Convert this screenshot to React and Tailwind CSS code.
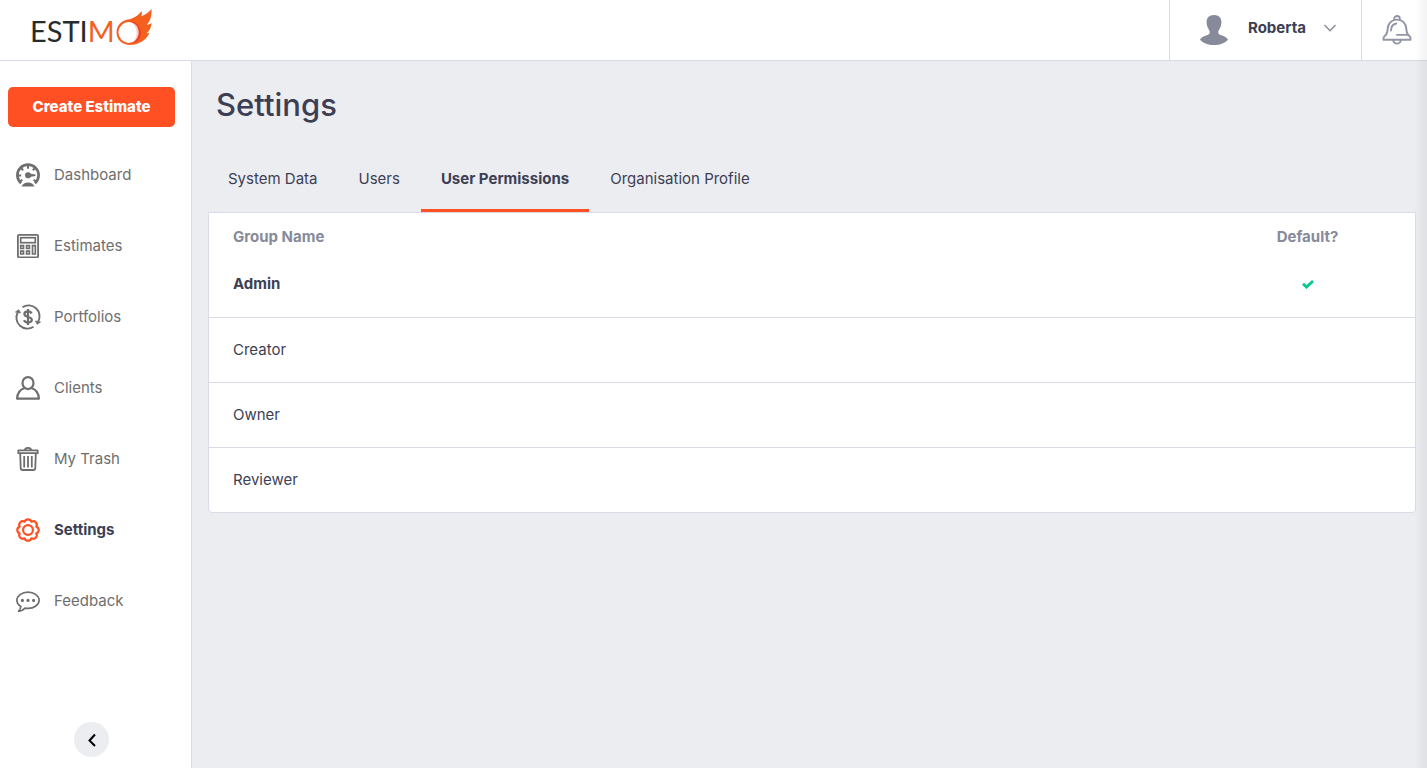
import React from "react";

const DashboardIcon = () => (
  <svg className="w-6 h-6" viewBox="0 0 24 24" fill="none" stroke="currentColor" aria-hidden="true">
    <path d="M5 20.200A10.600 10.600 0 1 1 19 20.200" strokeWidth="2.700" />
    <path d="M12 2v3.800M5 5l2.200 2.200M19 5l-2.200 2.200M2 12.500h3.200M4 18.500l2.400-1.800M20 18.500l-2.400-1.800" strokeWidth="2" />
    <path d="M5.500 23.500c1.300-2.600 3.500-3.900 6.500-3.900s5.200 1.300 6.500 3.900z" fill="currentColor" stroke="none" />
    <path d="M12 9.300c1.400 0 2.400.7 2.900 1.500l4.600.8v1.300l-4.600.8c-.5.900-1.500 1.600-2.900 1.600a3 3 0 0 1 0-6z" fill="currentColor" stroke="none" />
  </svg>
);

const EstimatesIcon = () => (
  <svg className="w-6 h-6" viewBox="0 0 24 24" fill="none" stroke="currentColor" aria-hidden="true">
    <rect x="1.900" y="0.900" width="20.200" height="22.400" rx="1" strokeWidth="1.800" />
    <rect x="4.700" y="3.700" width="14.600" height="5" strokeWidth="1.700" />
    <path d="M4.700 11.700h2.800v2.800H4.700zM10.600 11.700h2.800v2.800h-2.800zM4.700 17.200h2.800V20H4.700zM10.600 17.200h2.800V20h-2.800zM16.500 11.700h2.800V20h-2.800z" strokeWidth="1.700" />
  </svg>
);

const PortfoliosIcon = () => (
  <svg className="w-6 h-6 overflow-visible" viewBox="0 0 24 24" fill="none" stroke="currentColor" aria-hidden="true">
    <path d="M6.500 2.200A11 11 0 0 1 22.300 16.500M17.500 21.800A11 11 0 0 1 1.700 7.500" strokeWidth="1.900" />
    <path d="M19.500 16l5 1-3.300 2.300zM4.500 8l-5-1 3.300-2.300z" fill="currentColor" strokeWidth="0.800" />
    <path d="M15.600 8.500c-.6-1.400-1.900-2.100-3.600-2.100-2.100 0-3.600 1-3.600 2.600 0 3.900 7.400 2 7.400 5.800 0 1.700-1.600 2.700-3.800 2.700-2 0-3.400-.8-4-2.400M12 4v16" strokeWidth="2.200" />
  </svg>
);

const ClientsIcon = () => (
  <svg className="w-6 h-6" viewBox="0 0 24 24" fill="none" stroke="currentColor" strokeWidth="2.200" strokeLinejoin="round" aria-hidden="true">
    <path d="M8.700 12C4.200 13.400 1.300 17 1.100 22.700h21.800c-.2-5.700-3.100-9.300-7.600-10.700" />
    <ellipse cx="12" cy="7.100" rx="5.500" ry="6" />
  </svg>
);

const TrashIcon = () => (
  <svg className="w-6 h-6" viewBox="0 0 24 24" fill="none" stroke="currentColor" strokeWidth="1.800" strokeLinejoin="round" aria-hidden="true">
    <path d="M2.300 3.300h19.400v2.900H2.300zM8.800 3.300C9 1.600 10 .9 12 .9s3 .7 3.200 2.400" />
    <path d="M4.200 6.500l.5 14.600c.1 1.200.8 1.900 2 1.900h10.600c1.200 0 1.900-.7 2-1.900l.5-14.600M8.200 9v11.500M12 9v11.500M15.800 9v11.500" />
  </svg>
);

const SettingsIcon = () => (
  <svg className="w-6 h-6" viewBox="0 0 24 24" fill="none" stroke="currentColor" strokeWidth="2.200" strokeLinejoin="round" aria-hidden="true">
    <path d="M20.300 15.400A3.600 3.600 0 0 1 15.400 20.300A3.600 3.600 0 0 1 8.600 20.300A3.600 3.600 0 0 1 3.700 15.400A3.600 3.600 0 0 1 3.700 8.600A3.600 3.600 0 0 1 8.600 3.700A3.600 3.600 0 0 1 15.400 3.700A3.600 3.600 0 0 1 20.300 8.600A3.600 3.600 0 0 1 20.300 15.400Z" />
    <circle cx="12" cy="12" r="4.900" />
  </svg>
);

const FeedbackIcon = () => (
  <svg className="w-6 h-6" viewBox="0 0 24 24" fill="none" stroke="currentColor" strokeWidth="1.700" strokeLinejoin="round" aria-hidden="true">
    <path d="M12 3.200c6.200 0 11.100 3.600 11.100 8.100S18.200 19.400 12 19.400c-1 0-2-.1-2.900-.3-1.700 1.900-4.100 3-6.600 3.200 1.500-1.500 2.300-3 2.300-4.800C2.300 16 .9 13.800.9 11.300.9 6.800 5.800 3.200 12 3.200z" />
    <path d="M4.800 11.400a1.600 1.600 0 1 0 3.200 0 1.600 1.600 0 1 0-3.200 0zM10.400 11.400a1.600 1.600 0 1 0 3.200 0 1.600 1.600 0 1 0-3.200 0zM16 11.400a1.600 1.600 0 1 0 3.200 0 1.600 1.600 0 1 0-3.200 0z" fill="currentColor" stroke="none" />
  </svg>
);

const BellIcon = () => (
  <svg className="w-[30px] h-[30px]" viewBox="0 0 30 30" fill="none" stroke="currentColor" strokeWidth="1.900" strokeLinejoin="round" strokeLinecap="round" aria-hidden="true">
    <path d="M12.200 4.500V3.800a2.800 2.800 0 0 1 5.600 0v.7" />
    <path d="M15 4.600c-5.300 0-9 3.800-9.300 9-.2 3.600-.8 6-3.200 7.600-.7.500-1 1-1 2v1.600h27v-1.600c0-1-.3-1.500-1-2-2.400-1.600-3-4-3.200-7.600-.3-5.200-4-9-9.300-9z" />
    <path d="M9 15.500c0-3.600 2-6.300 5.300-7M15 19.900h11.500M11.300 25.200a3.700 3.400 0 0 0 7.400 0" />
  </svg>
);

const AvatarIcon = () => (
  <svg className="w-7 h-[30px]" viewBox="0 0 28 30" fill="#868a99" aria-hidden="true">
    <path d="M14 0c5 0 7.600 3 7.400 7.600-.2 3.800-1.500 6-2.700 7.800-.8 1.300-.6 3.200.8 4 2.200 1.100 6.500 1.800 8.500 5C25.500 27.800 20 30 14 30S2.500 27.800 0 24.400c2-3.200 6.300-3.900 8.500-5 1.400-.8 1.600-2.700.8-4C8.100 13.600 6.800 11.400 6.600 7.600 6.400 3 9 0 14 0z" />
  </svg>
);

const FireballIcon = () => (
  <svg className="w-9 h-9" viewBox="0 0 36 36" aria-hidden="true">
    <path
      fill="#f4611f"
      fillRule="evenodd"
      d="M.5 23.500C.5 16.500 5.500 11.500 12 10.600c5-.8 10-3.600 13.500-8.600.6 2 .5 3.500-.3 5.300C29.500 5.500 33 3.500 35.500 0c.6 6-1 11.500-4.700 16 1.700-.2 3.300-.8 4.700-2.200-.2 5-2 8.200-4.900 10.300 1 .3 1.800.2 2.800-.3C30.500 31.500 22 36 14 36 6.500 36 .5 30.800.5 23.500zM2.400 23.500a10.400 10.400 0 1 0 20.800 0 10.400 10.400 0 1 0-20.800 0z"
    />
    <path fill="#ee3b24" d="M13 12.300c8.500 2.500 10.500 16 3 21.800 8.500-1.500 10.500-9.600 7.400-15.400-2-4-6-6.400-10.400-6.400z" />
    <path fill="#fff" d="M13 13.100c7 .8 9.700 5.400 9.700 10.200 0 4.600-2.200 8.300-6.300 10.100 5.500-5.900 4.600-16.900-3.400-20.300z" opacity=".75" />
  </svg>
);

const navItems = [
  { label: "Dashboard", icon: DashboardIcon },
  { label: "Estimates", icon: EstimatesIcon },
  { label: "Portfolios", icon: PortfoliosIcon },
  { label: "Clients", icon: ClientsIcon },
  { label: "My Trash", icon: TrashIcon },
  { label: "Settings", icon: SettingsIcon, active: true },
  { label: "Feedback", icon: FeedbackIcon },
];

const tabs = ["System Data", "Users", "User Permissions", "Organisation Profile"];

const groups = [
  { name: "Admin", isDefault: true },
  { name: "Creator" },
  { name: "Owner" },
  { name: "Reviewer" },
];

const App = () => {
  return (
    <div className="min-h-screen flex flex-col bg-[#ecedf1] text-[#3c3f54] text-[15px] leading-6 font-['Inter',sans-serif]">
      <header className="h-[61px] flex justify-between bg-white border-b border-[#dadbe6]">
        <a href="#home" aria-label="Estimo" className="flex items-center gap-px pl-[30px] pb-1.5">
          <span className="pt-2 text-[29px] leading-9 text-[#262b2b] font-['Lato',sans-serif]">
            ESTI<span className="text-[#f4611f]">M</span>
          </span>
          <FireballIcon />
        </a>

        <div className="flex">
          <button type="button" className="w-48 flex items-center pl-[30px] pb-1 border-l border-[#dadbe6]">
            <span className="pt-1">
              <AvatarIcon />
            </span>
            <span className="ml-5 font-bold">Roberta</span>
            <svg className="ml-[18px] w-3 h-2" viewBox="0 0 12 8" fill="none" stroke="#868a99" strokeWidth="1.500" aria-hidden="true">
              <path d="M.5 1L6 6.700 11.500 1" />
            </svg>
          </button>
          <button type="button" aria-label="Notifications" className="w-[66px] flex items-center justify-center pl-1 pb-px border-l border-[#dadbe6] text-[#9295a5]">
            <BellIcon />
          </button>
        </div>
      </header>

      <div className="flex flex-1">
        {/* Sidebar */}
        <aside className="w-48 shrink-0 flex flex-col bg-white border-r border-[#dadbe6] pt-[26px] pb-[11px] pl-2 pr-4">
          <button type="button" className="h-10 rounded-[5px] bg-[#ff5023] text-white font-extrabold">
            Create Estimate
          </button>

          <nav className="mt-3">
            {navItems.map(({ label, icon: Icon, active }) => (
              <a
                key={label}
                href={`#${label}`}
                className={
                  active
                    ? "h-[71px] px-2 flex items-center gap-3.5 font-bold"
                    : "h-[71px] px-2 flex items-center gap-3.5 text-[#6e6e6e]"
                }
              >
                <span className={active ? "text-[#ff5023]" : "text-[#6e6e6e]"}>
                  <Icon />
                </span>
                {label}
              </a>
            ))}
          </nav>

          <button
            type="button"
            aria-label="Collapse menu"
            className="mt-auto mx-auto w-[35px] h-[35px] rounded-full bg-[#ecedf1] flex items-center justify-center"
          >
            <svg className="w-2 h-3.5" viewBox="0 0 8 14" fill="none" stroke="#000" strokeWidth="2" aria-hidden="true">
              <path d="M7 1.500L1.500 7.500 7 13" />
            </svg>
          </button>
        </aside>

        {/* Settings page */}
        <main className="flex-1 pl-4 pr-[11px] pt-6">
          <h1 className="pl-2 text-[31px] leading-10 font-medium">Settings</h1>

          <div role="tablist" className="mt-5 flex gap-px">
            {tabs.map((tab) => {
              const selected = tab === "User Permissions";
              return (
                <button
                  key={tab}
                  type="button"
                  role="tab"
                  aria-selected={selected}
                  className={
                    selected
                      ? "h-[67px] px-5 pt-[3px] border-b-[3px] border-[#ff5023] font-bold"
                      : "h-[67px] px-5"
                  }
                >
                  {tab}
                </button>
              );
            })}
          </div>

          <div className="bg-white border border-[#dadbe6] rounded-b overflow-hidden">
            <table className="w-full">
              <thead>
                <tr className="text-[#868a99]">
                  <th scope="col" className="pl-6 pt-3 pb-[3px] text-left font-bold">Group Name</th>
                  <th scope="col" className="w-[215px] pt-3 pb-[3px] font-bold">Default?</th>
                </tr>
              </thead>
              <tbody>
                {groups.map((group) => (
                  <tr key={group.name} className="border-b border-[#dadbe6] last:border-b-0">
                    <td className={group.isDefault ? "h-[65px] pl-6 font-bold" : "h-[65px] pl-6"}>{group.name}</td>
                    <td>
                      {group.isDefault && (
                        <svg className="mx-auto w-3 h-[9px]" viewBox="0 0 12 9" fill="none" stroke="#06c98d" strokeWidth="2.800" role="img" aria-label="Yes">
                          <path d="M1 3.800L4.500 7.100 11 1" />
                        </svg>
                      )}
                    </td>
                  </tr>
                ))}
              </tbody>
            </table>
          </div>
        </main>
      </div>

      <div className="fixed inset-y-0 right-0 w-3 bg-linear-to-l from-black/5 to-transparent pointer-events-none" />
    </div>
  );
};

export default App;
